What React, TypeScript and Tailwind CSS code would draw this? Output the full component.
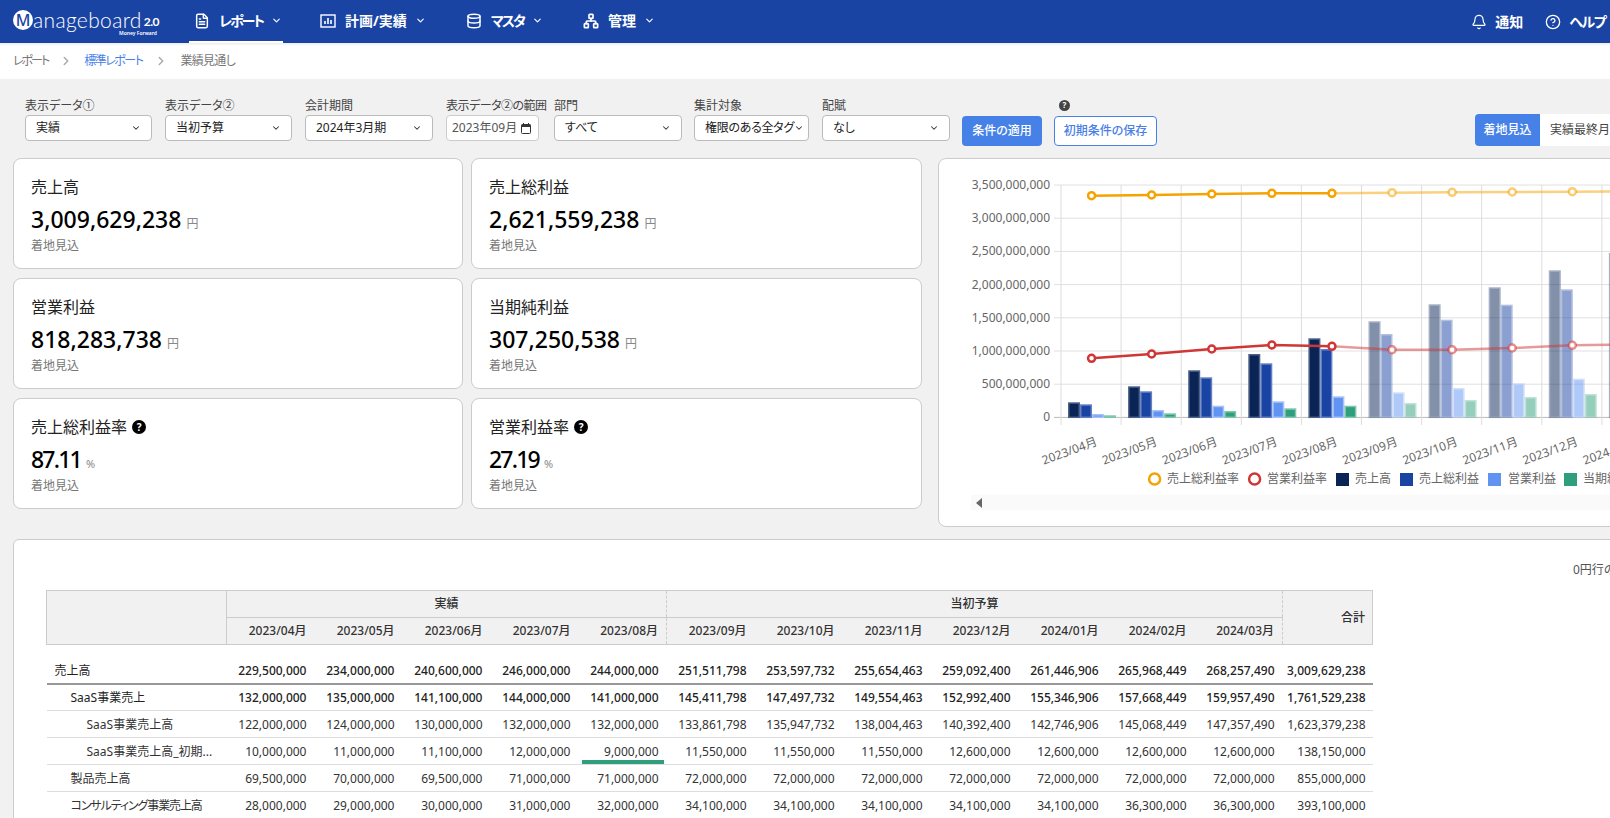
import React from 'react'
import { Bell, ChevronDown, ChevronRight, CircleHelp, Database, FileText, Network } from 'lucide-react'

type Row = { name: string; indent: number; bold?: boolean; thick?: boolean; tight?: boolean; values: string[] }

const filters = [
  { label: '表示データ①', value: '実績', width: 'w-[127px]' },
  { label: '表示データ②', value: '当初予算', width: 'w-[127px]' },
  { label: '会計期間', value: '2024年3月期', width: 'w-[128px]' }
]

const cards = [
  { title: '売上高', value: '3,009,629,238', unit: '円' },
  { title: '売上総利益', value: '2,621,559,238', unit: '円' },
  { title: '営業利益', value: '818,283,738', unit: '円' },
  { title: '当期純利益', value: '307,250,538', unit: '円' },
  { title: '売上総利益率', value: '87.11', unit: '%', help: true },
  { title: '営業利益率', value: '27.19', unit: '%', help: true }
]

const actualMonths = ['2023/04月', '2023/05月', '2023/06月', '2023/07月', '2023/08月']
const budgetMonths = ['2023/09月', '2023/10月', '2023/11月', '2023/12月', '2024/01月', '2024/02月', '2024/03月']
const months = [...actualMonths, ...budgetMonths]

const rows: Row[] = [
  { name: '売上高', indent: 0, bold: true, thick: true, values: ['229,500,000', '234,000,000', '240,600,000', '246,000,000', '244,000,000', '251,511,798', '253,597,732', '255,654,463', '259,092,400', '261,446,906', '265,968,449', '268,257,490', '3,009,629,238'] },
  { name: 'SaaS事業売上', indent: 1, bold: true, values: ['132,000,000', '135,000,000', '141,100,000', '144,000,000', '141,000,000', '145,411,798', '147,497,732', '149,554,463', '152,992,400', '155,346,906', '157,668,449', '159,957,490', '1,761,529,238'] },
  { name: 'SaaS事業売上高', indent: 2, values: ['122,000,000', '124,000,000', '130,000,000', '132,000,000', '132,000,000', '133,861,798', '135,947,732', '138,004,463', '140,392,400', '142,746,906', '145,068,449', '147,357,490', '1,623,379,238'] },
  { name: 'SaaS事業売上高_初期...', indent: 2, values: ['10,000,000', '11,000,000', '11,100,000', '12,000,000', '9,000,000', '11,550,000', '11,550,000', '11,550,000', '12,600,000', '12,600,000', '12,600,000', '12,600,000', '138,150,000'] },
  { name: '製品売上高', indent: 1, values: ['69,500,000', '70,000,000', '69,500,000', '71,000,000', '71,000,000', '72,000,000', '72,000,000', '72,000,000', '72,000,000', '72,000,000', '72,000,000', '72,000,000', '855,000,000'] },
  { name: 'コンサルティング事業売上高', indent: 1, tight: true, values: ['28,000,000', '29,000,000', '30,000,000', '31,000,000', '32,000,000', '34,100,000', '34,100,000', '34,100,000', '34,100,000', '34,100,000', '36,300,000', '36,300,000', '393,100,000'] }
]

// chart numbers, read off the screenshot in page pixels
const chartLeft = 1061
const band = 60.1
const baseY = 417.3
const yLabels = ['3,500,000,000', '3,000,000,000', '2,500,000,000', '2,000,000,000', '1,500,000,000', '1,000,000,000', '500,000,000', '0']
const barColors = ['#0a2456', '#1a44a4', '#6194f2', '#2f9e7c']
const barBorders = ['#4c6188', '#6580c2', '#a6c3f8', '#80c6af']
const barTops = [
  [402.3, 404.3, 414, 415.3],
  [386.3, 391.3, 410, 413.3],
  [370.3, 377.3, 405.7, 411],
  [354, 363.3, 401.3, 408.3],
  [338.3, 349, 396.3, 405.7],
  [321.3, 334, 392.3, 403],
  [304.3, 319.7, 388, 400],
  [287.3, 304.7, 383.3, 397],
  [270.3, 289.3, 378.7, 394],
  [253, 274, 374, 391]
]
const orangeY = [195.7, 195, 194, 193.3, 193.3, 192.7, 192.3, 192, 191.7, 191.3]
const redY = [358.3, 354, 349, 345, 346.3, 349.7, 349.7, 348, 345.3, 344.3]
const legend = [
  { x: 1167, text: '売上総利益率' },
  { x: 1267, text: '営業利益率' },
  { x: 1355, text: '売上高' },
  { x: 1419, text: '売上総利益' },
  { x: 1508, text: '営業利益' },
  { x: 1583, text: '当期純利益' }
]

function SelectBox({ value, width }: { value: string; width: string }) {
  return (
    <div className={`${width} flex h-[26px] items-center justify-between rounded-[4px] border border-[#bbb] bg-white pl-[10px] pr-[10px] text-xs text-[#222]`}>
      <span className="whitespace-nowrap">{value}</span>
      <ChevronDown size={10} strokeWidth={2.5} className="shrink-0 text-[#333]" />
    </div>
  )
}

function HelpBadge({ size = 'h-[14px] w-[14px] text-[10px]', bg = 'bg-black' }: { size?: string; bg?: string }) {
  return <span className={`${size} ${bg} inline-flex items-center justify-center rounded-full font-bold leading-none text-white`}>?</span>
}

function NavItem({ icon, label, width, labelClass = '', active }: { icon: React.ReactNode; label: string; width: string; labelClass?: string; active?: boolean }) {
  return (
    <div className={`${width} flex h-[43px] shrink-0 items-center gap-[9px] border-b-2 pl-[5px] ${active ? 'border-white' : 'border-transparent'}`}>
      <span className="flex w-[16px] shrink-0 justify-center">{icon}</span>
      <span className={`whitespace-nowrap text-[14px] font-bold text-white ${labelClass}`}>{label}</span>
      <ChevronDown size={11} strokeWidth={2.5} className="-ml-[1px] text-white" />
    </div>
  )
}

function PlanIcon() {
  return (
    <svg width="16" height="16" viewBox="0 0 16 16" fill="none" stroke="white">
      <rect x="1" y="2" width="14" height="12" strokeWidth="1.4" />
      <path d="M5 11V8M8 11V5M11 11V7" strokeWidth="1.6" />
    </svg>
  )
}

function CalendarIcon() {
  return (
    <svg width="10" height="11" viewBox="0 0 10 11" fill="none" className="shrink-0">
      <rect x="0.5" y="1.5" width="9" height="9" rx="1" stroke="#333" />
      <rect x="0.5" y="1.5" width="9" height="2.5" fill="#333" />
      <path d="M2.5 0v2M7.5 0v2" stroke="#333" />
    </svg>
  )
}

function Chart() {
  return (
    <svg width="798" height="367" viewBox="939 159 798 367" className="block">
      {yLabels.map((label, i) => {
        const y = 185 + i * 33.2
        return (
          <g key={label}>
            <line x1={chartLeft - 7} x2={1740} y1={y} y2={y} stroke={i === 7 ? '#bbb' : '#e0e0e0'} />
            <text x={1050} y={y + 4} textAnchor="end" fontSize="12" fill="#666">{label}</text>
          </g>
        )
      })}
      {months.map((m, i) => {
        const x = chartLeft + i * band
        return (
          <g key={m}>
            <line x1={x} x2={x} y1={185} y2={425} stroke="#ddd" />
            <text x={x + 37} y={445} textAnchor="end" fontSize="12" fill="#666" transform={`rotate(-20 ${x + 37} 445)`}>{m}</text>
          </g>
        )
      })}
      {barTops.map((tops, i) => (
        <g key={i} opacity={i >= 5 ? 0.5 : 1}>
          {tops.map((top, j) => (
            <rect
              key={j}
              x={chartLeft + i * band + 7.75 + j * 12}
              y={top + 0.75}
              width={10.5}
              height={baseY - top - 0.75}
              fill={barColors[j]}
              stroke={barBorders[j]}
              strokeWidth={1.5}
            />
          ))}
        </g>
      ))}
      {[
        { ys: orangeY, color: '#f5a300' },
        { ys: redY, color: '#d03636' }
      ].map(({ ys, color }) => {
        const pts = ys.map((y, i) => `${chartLeft + (i + 0.5) * band + 0.5},${y}`)
        return (
          <g key={color} fill="none" stroke={color} strokeWidth="2.5">
            <polyline points={pts.slice(0, 5).join(' ')} />
            <polyline points={pts.slice(4).join(' ')} opacity="0.5" />
            {ys.map((y, i) => (
              <circle key={i} cx={chartLeft + (i + 0.5) * band + 0.5} cy={y} r="3.5" fill="white" strokeOpacity={i >= 5 ? 0.55 : 1} />
            ))}
          </g>
        )
      })}
      <circle cx="1154.6" cy="479" r="5.5" fill="white" stroke="#f5a300" strokeWidth="2.5" />
      <circle cx="1254.6" cy="479" r="5.5" fill="white" stroke="#d03636" strokeWidth="2.5" />
      <rect x="1336" y="473" width="13" height="13" fill={barColors[0]} />
      <rect x="1400" y="473" width="13" height="13" fill={barColors[1]} />
      <rect x="1488" y="473" width="13" height="13" fill={barColors[2]} />
      <rect x="1564" y="473" width="13" height="13" fill={barColors[3]} />
      {legend.map((l) => (
        <text key={l.text} x={l.x} y={483} fontSize="12" fill="#666">{l.text}</text>
      ))}
      <rect x="971" y="495" width="760" height="15" fill="#fafafa" />
      <path d="M976 503l6-5v10z" fill="#666" />
    </svg>
  )
}

export default function App() {
  return (
    <div className="h-[818px] w-full overflow-hidden bg-[#f1f1f1] font-['Noto_Sans','Noto_Sans_CJK_JP',sans-serif] text-[#333] [font-feature-settings:'palt']">
      <header className="flex h-[43px] items-center bg-[#1a44a4] pl-[13px] pr-[5px]">
        <div className="flex h-[43px] w-[144px] shrink-0 flex-col justify-start">
          <div className="mt-[10px] flex h-[20px] items-center">
            <span className="flex h-[20px] w-[20px] shrink-0 items-center justify-center rounded-full bg-white text-[16px] font-medium leading-none text-[#1a44a4]">M</span>
            <span className="whitespace-nowrap font-['Lato',sans-serif] text-[21px] font-light leading-[20px] tracking-[0.35px] text-white">anageboard</span>
            <span className="ml-[2px] mt-[3px] font-['Lato',sans-serif] text-[12px] font-bold leading-none tracking-[-0.5px] text-white">2.0</span>
          </div>
          <span className="mt-[1px] self-end whitespace-nowrap text-[5px] font-semibold leading-[5px] text-white">Money Forward</span>
        </div>
        <nav className="ml-[32px] flex gap-[32px]">
          <NavItem active width="w-[94px]" label="レポート" labelClass="tracking-[-2px]" icon={<FileText size={18} color="white" strokeWidth={2.2} />} />
          <NavItem width="w-[114px]" label="計画/実績" icon={<PlanIcon />} />
          <NavItem width="w-[85px]" label="マスタ" labelClass="tracking-[-2px]" icon={<Database size={16} color="white" strokeWidth={2.2} />} />
          <NavItem width="w-[78px]" label="管理" icon={<Network size={16} color="white" strokeWidth={2.5} />} />
        </nav>
        <div className="ml-auto flex items-center text-[14px] font-bold text-white">
          <Bell size={16} strokeWidth={1.8} />
          <span className="ml-[8px] mr-[22px]">通知</span>
          <CircleHelp size={16} strokeWidth={2} />
          <span className="ml-[8px] whitespace-nowrap tracking-[-1.5px]">ヘルプ</span>
        </div>
      </header>

      <div className="flex h-[36px] items-center bg-white pl-[13px] text-xs text-[#777] shadow-[inset_0_3px_3px_-2px_rgba(0,0,0,0.1)]">
        <span className="tracking-[-2px]">レポート</span>
        <ChevronRight size={14} strokeWidth={2.5} className="mx-[11px] text-[#aaa]" />
        <span className="tracking-[-1.5px] text-[#4a7fe8]">標準レポート</span>
        <ChevronRight size={14} strokeWidth={2.5} className="mx-[12px] text-[#aaa]" />
        <span className="tracking-[-0.7px]">業績見通し</span>
      </div>

      <div className="flex h-[79px] items-start gap-[13px] overflow-hidden pl-[25px] pt-[16px] text-xs">
        {filters.map((f) => (
          <div key={f.label} className="shrink-0">
            <div className="h-[20px] leading-[22px] text-[#444]">{f.label}</div>
            <SelectBox value={f.value} width={f.width} />
          </div>
        ))}
        <div className="w-[93px] shrink-0">
          <div className="h-[20px] whitespace-nowrap leading-[22px] tracking-[-0.5px] text-[#444]">表示データ②の範囲</div>
          <div className="flex h-[26px] items-center justify-between rounded-[4px] border border-[#ccc] bg-white pl-[5px] pr-[7px] text-[#555]">
            <span className="whitespace-nowrap">2023年09月</span>
            <CalendarIcon />
          </div>
        </div>
        <div className="ml-[2px] shrink-0">
          <div className="h-[20px] leading-[22px] text-[#444]">部門</div>
          <SelectBox value="すべて" width="w-[128px]" />
        </div>
        <div className="-ml-px shrink-0">
          <div className="h-[20px] leading-[22px] text-[#444]">集計対象</div>
          <div className="flex h-[26px] w-[115px] items-center justify-between rounded-[4px] border border-[#bbb] bg-white pl-[10px] pr-[4px] text-[#222]">
            <span className="whitespace-nowrap tracking-[-0.3px]">権限のある全タグ</span>
            <ChevronDown size={10} strokeWidth={2.5} className="shrink-0 text-[#333]" />
          </div>
        </div>
        <div className="shrink-0">
          <div className="h-[20px] leading-[22px] text-[#444]">配賦</div>
          <SelectBox value="なし" width="w-[128px]" />
        </div>
        <button type="button" className="-ml-px mt-[21px] h-[30px] w-[80px] shrink-0 rounded-[4px] bg-[#4681e8] font-medium text-white">条件の適用</button>
        <div className="-ml-px shrink-0">
          <div className="flex h-[20px] items-center pl-[5px]">
            <HelpBadge size="h-[11px] w-[11px] text-[8px]" bg="bg-[#444]" />
          </div>
          <button type="button" className="mt-px h-[30px] w-[103px] rounded-[4px] border border-[#4681e8] bg-white font-medium text-[#4a7fe8]">初期条件の保存</button>
        </div>
        <div className="ml-[305px] mt-[19px] flex h-[32px] shrink-0">
          <span className="flex w-[65px] items-center justify-center rounded-l-[4px] bg-[#4681e8] font-medium text-white">着地見込</span>
          <span className="flex w-[90px] items-center whitespace-nowrap bg-white pl-[10px] text-[#444]">実績最終月</span>
        </div>
      </div>

      <div className="flex pl-[13px]">
        <div className="grid w-[909px] shrink-0 grid-cols-[450px_451px] grid-rows-[111px_111px_111px] gap-x-[8px] gap-y-[9px]">
          {cards.map((c) => (
            <div key={c.title} className="rounded-[8px] border border-[#ccc] bg-white pl-[17px] pt-[15px]">
              <div className="flex h-[26px] items-center gap-[5px] text-[16px] leading-none text-[#222]">
                {c.title}
                {c.help && <HelpBadge />}
              </div>
              <div className="mt-[3px] flex h-[32px] items-baseline whitespace-nowrap text-[23px] font-medium leading-[32px] text-black">
                <span className={c.unit === '%' ? 'tracking-[-1.8px]' : ''}>{c.value}</span>
                <span className={`font-normal text-[#888] ${c.unit === '%' ? 'ml-[5px] text-[11px]' : 'ml-[5px] text-[12px]'}`}>{c.unit}</span>
              </div>
              <div className="mt-[1px] text-xs leading-[20px] text-[#777]">着地見込</div>
            </div>
          ))}
        </div>
        <div className="ml-[16px] h-[369px] w-[800px] shrink-0 rounded-[8px] border border-[#ccc] bg-white">
          <Chart />
        </div>
      </div>

      <div className="ml-[13px] mt-[12px] h-[400px] w-[1700px] rounded-[6px] border border-[#ccc] bg-white">
        <div className="h-[50px] whitespace-nowrap pl-[1559px] pt-[20px] text-xs leading-[20px] text-[#555]">0円行の非表示</div>
        <table className="ml-[32px] w-[1326px] table-fixed border-collapse text-xs">
          <colgroup>
            <col className="w-[180px]" />
            {months.map((m) => <col key={m} className="w-[88px]" />)}
            <col className="w-[90px]" />
          </colgroup>
          <thead className="bg-[#f1f1f1] font-medium">
            <tr className="h-[27px]">
              <th rowSpan={2} className="border border-[#ccc]" />
              <th colSpan={5} className="border-y border-[#ccc] border-l border-l-[#ccc] font-medium [border-left-style:dashed]">実績</th>
              <th colSpan={7} className="border-y border-[#ccc] border-l border-l-[#ccc] font-medium [border-left-style:dashed]">当初予算</th>
              <th rowSpan={2} className="border border-[#ccc] pr-[7px] text-right font-medium [border-left-style:dashed]">合計</th>
            </tr>
            <tr className="h-[27px] border-b border-[#ccc]">
              {months.map((m, i) => (
                <th key={m} className={`pr-[8px] text-right font-medium ${i === 0 || i === 5 ? 'border-l border-dashed border-l-[#ccc]' : ''}`}>{m}</th>
              ))}
            </tr>
          </thead>
          <tbody>
            <tr className="h-[12px]"><td colSpan={14} /></tr>
            {rows.map((row) => (
              <tr key={row.name} className={`h-[27px] ${row.thick ? 'border-b-2 border-[#999]' : 'border-b border-[#ddd]'} ${row.bold ? 'font-medium text-[#222]' : 'text-[#333]'}`}>
                <td className={`overflow-hidden whitespace-nowrap font-normal ${row.thick ? 'pt-[3px]' : 'pt-[2px]'} ${row.tight ? 'tracking-[-1.1px]' : ''} ${row.indent === 0 ? 'pl-[8px]' : row.indent === 1 ? 'pl-[24px]' : 'pl-[40px]'}`}>{row.name}</td>
                {row.values.map((v, i) => (
                  <td key={i} className={`relative text-right ${i === 12 ? 'pr-[7px]' : 'pr-[8px]'} ${row.thick ? 'pt-[3px]' : 'pt-[2px]'}`}>
                    {v}
                    {v === '9,000,000' && <span className="absolute inset-x-[3px] bottom-0 h-[4px] bg-[#2f9e7c]" />}
                  </td>
                ))}
              </tr>
            ))}
          </tbody>
        </table>
      </div>
    </div>
  )
}
